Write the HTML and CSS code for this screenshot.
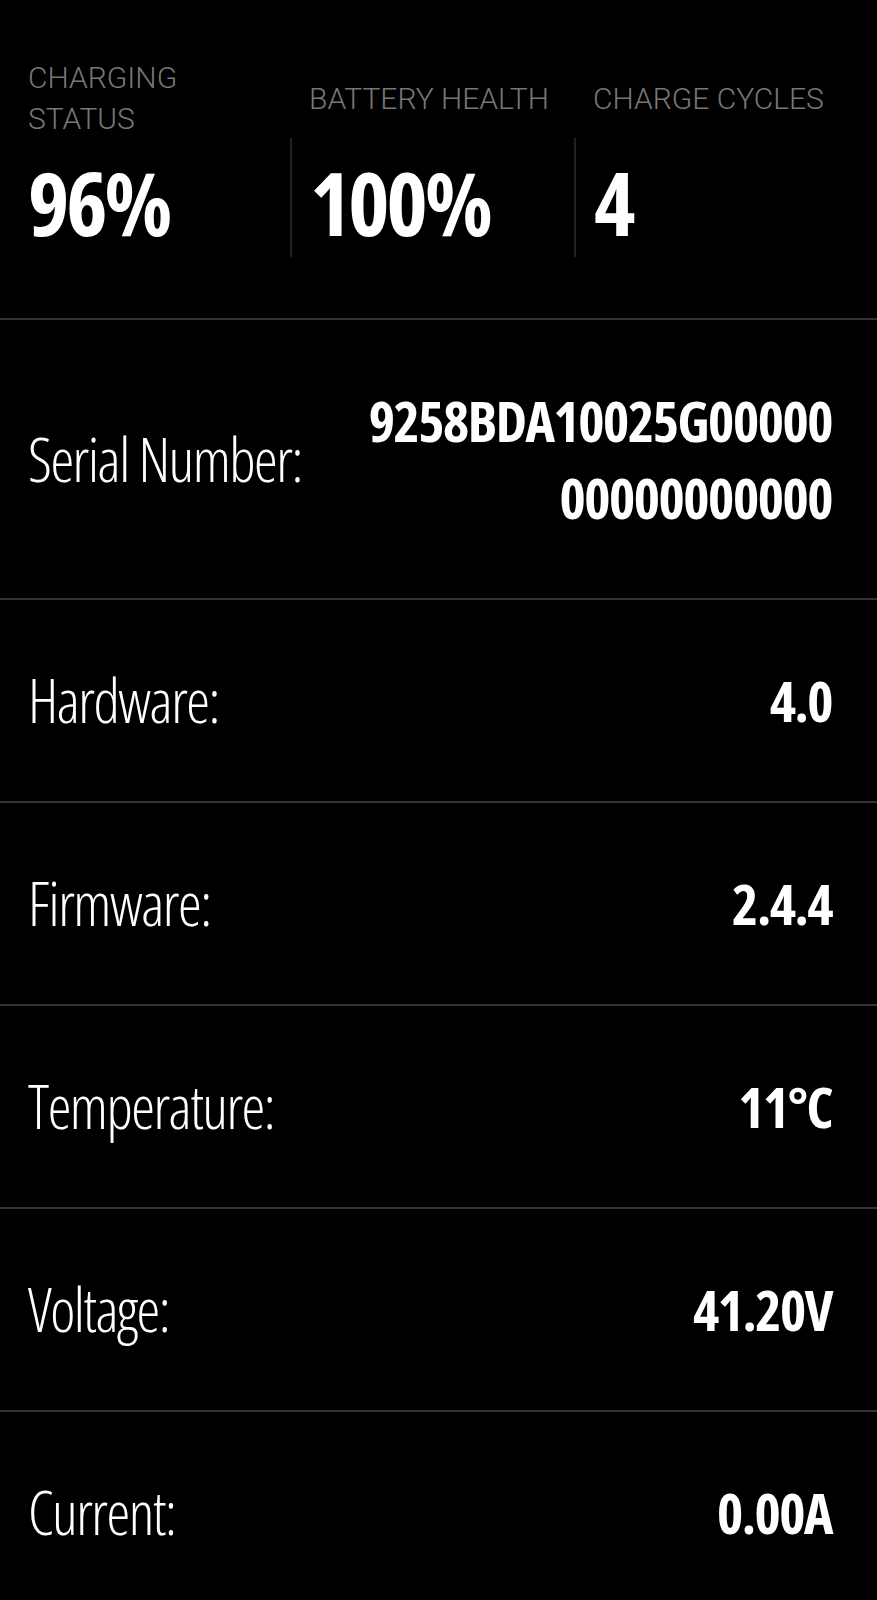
FILE: index.html
```html
<!DOCTYPE html>
<html lang="en">
<head>
  <meta charset="UTF-8">
  <meta name="viewport" content="width=device-width, initial-scale=1.0">
  <title>Battery Info</title>
  <link rel="stylesheet" href="styles.css">
</head>
<body>
  <section class="stats">
    <div class="stat">
      <div class="stat-label">CHARGING<br>STATUS</div>
      <div class="stat-value">96%</div>
    </div>
    <div class="stat">
      <div class="stat-label">BATTERY HEALTH</div>
      <div class="stat-value split">100%</div>
    </div>
    <div class="stat">
      <div class="stat-label">CHARGE CYCLES</div>
      <div class="stat-value split">4</div>
    </div>
  </section>

  <ul class="details">
    <li class="row">
      <span class="row-label">Serial Number:</span>
      <span class="row-value">9258BDA10025G00000<br>00000000000</span>
    </li>
    <li class="row">
      <span class="row-label">Hardware:</span>
      <span class="row-value">4.0</span>
    </li>
    <li class="row">
      <span class="row-label">Firmware:</span>
      <span class="row-value">2.4.4</span>
    </li>
    <li class="row">
      <span class="row-label">Temperature:</span>
      <span class="row-value">11°C</span>
    </li>
    <li class="row">
      <span class="row-label">Voltage:</span>
      <span class="row-value">41.20V</span>
    </li>
    <li class="row">
      <span class="row-label">Current:</span>
      <span class="row-value">0.00A</span>
    </li>
  </ul>
</body>
</html>
```
FILE: styles.css
```css
body {
  margin: 0;
  background-color: #000000;
  color: #ffffff;
  font-family: 'Open Sans', 'DejaVu Sans', sans-serif;
  font-stretch: condensed;
}

.stats {
  display: grid;
  grid-template-columns: 262px 284px 1fr;
  padding: 58px 0 61px 28px;
  border-bottom: 2px solid #333333;
}

.stat-label {
  height: 80px;
  display: flex;
  align-items: center;
  font-family: Roboto, 'DejaVu Sans', sans-serif;
  font-stretch: normal;
  font-size: 30px;
  line-height: 41px;
  font-weight: 300;
  color: #777777;
}

.stat-value {
  height: 119px;
  display: flex;
  align-items: center;
  padding-top: 8px;
  box-sizing: border-box;
  font-size: 88px;
  line-height: 1;
  font-weight: 700;
  letter-spacing: -3px;
}

.stat-value.split {
  border-left: 2px solid #222222;
  padding-left: 18px;
}

.stat:nth-child(n+2) .stat-label {
  padding-left: 19px;
}

.details {
  list-style: none;
  margin: 0;
  padding: 0;
}

.row {
  display: flex;
  justify-content: space-between;
  align-items: center;
  padding: 62px 45px 62px 28px;
  border-bottom: 2px solid #333333;
}

.row-label {
  font-size: 60px;
  line-height: 77px;
  font-weight: 300;
  letter-spacing: -1.5px;
  white-space: nowrap;
}

.row-value {
  font-size: 56px;
  line-height: 77px;
  font-weight: 700;
  letter-spacing: -1.5px;
  text-align: right;
}
```
